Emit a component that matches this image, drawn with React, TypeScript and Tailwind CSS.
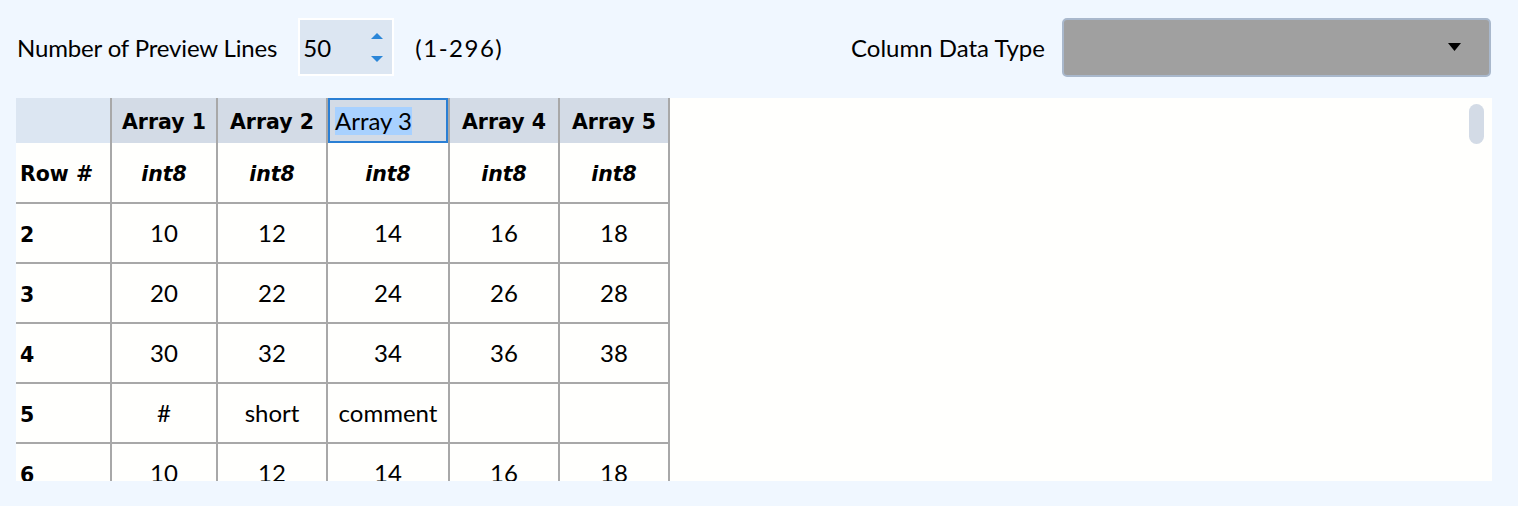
import React from 'react';

const columns = [
  { name: 'Array 1', width: 'w-[106px]' },
  { name: 'Array 2', width: 'w-[110px]' },
  { name: 'Array 3', width: 'w-[122px]' },
  { name: 'Array 4', width: 'w-[110px]' },
  { name: 'Array 5', width: 'w-[110px]' },
];

const rows = [
  { row: '2', values: ['10', '12', '14', '16', '18'] },
  { row: '3', values: ['20', '22', '24', '26', '28'] },
  { row: '4', values: ['30', '32', '34', '36', '38'] },
  { row: '5', values: ['#', 'short', 'comment', '', ''] },
  { row: '6', values: ['10', '12', '14', '16', '18'] },
];

const lato = "font-['Lato','Noto_Sans',sans-serif]";
const bold = "font-['DejaVu_Sans',sans-serif] font-bold";

function Spinner() {
  return (
    <div className="flex flex-col items-center gap-[17px] mr-[9px]">
      <svg width="12" height="6" viewBox="0 0 12 6">
        <path d="M6 0 L12 6 L0 6 Z" fill="#2b86d8" />
      </svg>
      <svg width="12" height="6" viewBox="0 0 12 6">
        <path d="M0 0 L12 0 L6 6 Z" fill="#2b86d8" />
      </svg>
    </div>
  );
}

export default function App() {
  return (
    <div className={`w-[1518px] h-[506px] bg-[#f0f7ff] text-black ${lato}`}>
      {/* Toolbar */}
      <div className="flex items-center h-[76px] pt-[18px] pl-[17px] pr-[27px]">
        <span className="text-[24px] tracking-[-0.15px] pt-[2px]">Number of Preview Lines</span>
        <div className="ml-[21px] w-[96px] h-[58px] border-2 border-white bg-[#dce6f2] flex items-center justify-between">
          <span className="pl-[3px] pt-[2px] text-[24px]">50</span>
          <Spinner />
        </div>
        <span className="ml-[21px] pt-[2px] text-[24px] tracking-[1.5px]">(1-296)</span>
        <span className="ml-auto pt-[2px] text-[24px]">Column Data Type</span>
        <div className="ml-[17px] w-[429px] h-[59px] rounded-[5px] border-2 border-[#a9b8cc] bg-[#a0a0a0] flex items-center justify-end pr-[28px]">
          <svg width="13" height="8" viewBox="0 0 13 8">
            <path d="M0 0 L13 0 L6.5 8 Z" fill="#000" />
          </svg>
        </div>
      </div>

      {/* Preview grid */}
      <div className="relative mt-[22px] ml-[16px] w-[1476px] h-[383px] overflow-hidden bg-[#fffffd]">
        <table className="table-fixed border-collapse">
          <thead>
            <tr className="h-[45px]">
              <th className="w-[95px] bg-[#dce6f2] p-0" />
              {columns.map((c) =>
                c.name === 'Array 3' ? (
                  <th key={c.name} className={`${c.width} p-0 bg-[#d3dbe6] border-x-2 border-[#a8a8a8]`}>
                    <div className="h-[45px] border-2 border-[#2a7fd4] flex items-center pl-[5px]">
                      <span className={`${lato} font-normal text-[24px] bg-[#a8d1ff] leading-[28px]`}>Array 3</span>
                    </div>
                  </th>
                ) : (
                  <th key={c.name} className={`${c.width} p-0 pt-[4px] bg-[#d3dbe6] border-x-2 border-[#a8a8a8] ${bold} text-[20.5px]`}>
                    {c.name}
                  </th>
                )
              )}
            </tr>
          </thead>
          <tbody>
            <tr className="h-[60px]">
              <td className={`p-0 pl-[4px] pt-[4px] border-2 border-l-0 border-t-0 border-[#a8a8a8] ${bold} text-[20.5px]`}>Row #</td>
              {columns.map((c) => (
                <td key={c.name} className={`p-0 pt-[4px] text-center border-2 border-t-0 border-[#a8a8a8] ${bold} italic text-[20.5px]`}>
                  int8
                </td>
              ))}
            </tr>
            {rows.map((r) => (
              <tr key={r.row} className="h-[60px]">
                <td className={`p-0 pl-[4px] pt-[4px] border-2 border-l-0 border-[#a8a8a8] ${bold} text-[20.5px]`}>{r.row}</td>
                {r.values.map((v, i) => (
                  <td key={i} className="p-0 text-center border-2 border-[#a8a8a8] text-[24px]">
                    {v}
                  </td>
                ))}
              </tr>
            ))}
          </tbody>
        </table>
        <div className="absolute top-[6px] right-[8px] w-[15px] h-[40px] rounded-full bg-[#d3dbe6]" />
      </div>
    </div>
  );
}
